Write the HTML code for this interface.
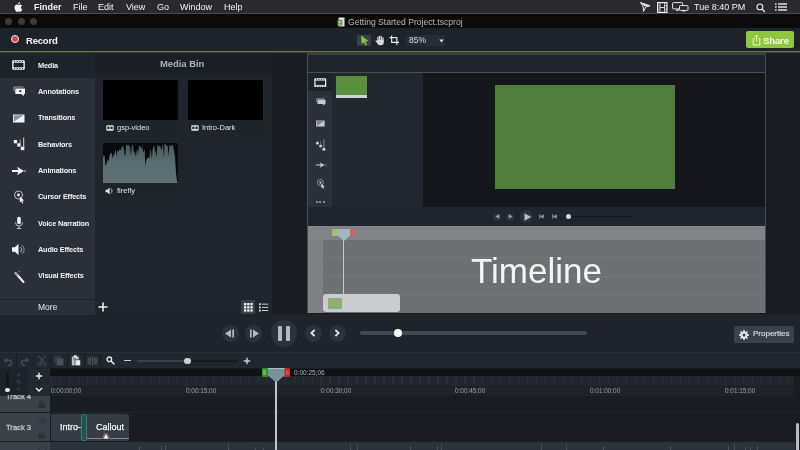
<!DOCTYPE html>
<html>
<head>
<meta charset="utf-8">
<title>Getting Started Project.tscproj</title>
<style>
html,body{margin:0;padding:0;}
body{width:800px;height:450px;overflow:hidden;background:#1e222b;position:relative;font-family:"Liberation Sans",sans-serif;color:#fff;}
.a{position:absolute;}
.t{position:absolute;white-space:nowrap;line-height:1;will-change:transform;}
#menubar{left:0;top:0;width:800px;height:14px;background:#2a2a2c;}
#menubar .t{top:2.5px;font-size:9px;color:#f2f2f2;}
#titlebar{left:0;top:14px;width:800px;height:14px;background:#0b0b0c;}
#toolbar{left:0;top:28px;width:800px;height:24px;background:#1e222b;}
#gline{left:0;top:51px;width:800px;height:1px;background:#65774b;border-bottom:1px solid #38422f;}
#sidebar{left:0;top:53px;width:95px;height:261.500px;background:#2a2f39;z-index:1;}
#sidebar .sel{left:0;top:0;width:95px;height:25px;background:#1e222b;}
#sidebar .lbl{font-size:7.300px;font-weight:bold;color:#f1f3f5;left:37.600px;letter-spacing:-0.150px;}
#bin{left:94px;top:53px;width:178px;height:261.500px;background:#20242d;}
#gap{left:272px;top:53px;width:36px;height:261px;background:#191c21;}
#right{left:765px;top:53px;width:35px;height:261px;background:#1a1c22;border-left:1px solid #454a52;box-sizing:border-box;}
#pv{left:308px;top:53px;width:457px;height:260px;background:#20242e;overflow:hidden;}
#play{left:0;top:314px;width:800px;height:38px;background:#1f232c;}
#tl{left:0;top:352px;width:800px;height:98px;background:#191c21;}
.rl{top:36px;font-size:6.400px;color:#9aa0a8;}
</style>
</head>
<body>

<!-- mac menubar -->
<div id="menubar" class="a">
  <svg class="a" style="left:13px;top:1.5px" width="10" height="11" viewBox="0 0 20 22"><path fill="#f2f2f2" d="M14.2 0c.1 1.200-.4 2.400-1.100 3.200-.8.900-2 1.600-3.100 1.500-.1-1.200.4-2.400 1.100-3.100C11.900.7 13.200.1 14.200 0zM18 7.500c-.1.100-2 1.200-2 3.600 0 2.800 2.400 3.700 2.500 3.800 0 .1-.4 1.400-1.300 2.700-.8 1.200-1.600 2.300-2.900 2.300s-1.600-.7-3.100-.7c-1.400 0-1.900.8-3.100.8s-2-1.100-3-2.400C3.900 15.800 3 13.300 3 11c0-3.800 2.500-5.800 4.900-5.800 1.300 0 2.400.9 3.200.9.800 0 2-.9 3.500-.9.600 0 2.600.1 3.400 2.300z"/></svg>
  <span class="t" style="left:34px;font-weight:bold">Finder</span>
  <span class="t" style="left:73px">File</span>
  <span class="t" style="left:98px">Edit</span>
  <span class="t" style="left:126px">View</span>
  <span class="t" style="left:157px">Go</span>
  <span class="t" style="left:180px">Window</span>
  <span class="t" style="left:224px">Help</span>
  <span class="t" style="left:694px">Tue 8:40 PM</span>
  <svg class="a" style="left:640px;top:2px" width="11" height="10" viewBox="0 0 11 10"><path d="M0.500 0.500 L10 3.800 L5.800 5 L3.500 9.500 L3.200 4.800Z" fill="none" stroke="#e8e8e8" stroke-width="1"/><path d="M0.500 0.500 L10 3.800 L4.500 4.300Z" fill="#e8e8e8"/></svg>
  <svg class="a" style="left:656.500px;top:1.500px" width="11" height="11" viewBox="0 0 11 11"><rect x="0.600" y="0.600" width="9.300" height="9.800" fill="none" stroke="#ededed" stroke-width="1.200"/><rect x="2.600" y="0.600" width="0.800" height="9.800" fill="#ededed"/><rect x="7.100" y="0.600" width="0.800" height="9.800" fill="#ededed"/><rect x="2.600" y="5.100" width="5" height="0.900" fill="#ededed"/><rect x="0.600" y="3.500" width="2.200" height="0.700" fill="#ededed"/><rect x="0.600" y="6.800" width="2.200" height="0.700" fill="#ededed"/><rect x="7.700" y="3.500" width="2.200" height="0.700" fill="#ededed"/><rect x="7.700" y="6.800" width="2.200" height="0.700" fill="#ededed"/></svg>
  <svg class="a" style="left:671.500px;top:2px" width="17" height="10" viewBox="0 0 17 10"><rect x="0.600" y="0.600" width="10" height="6.300" rx="0.800" fill="none" stroke="#e8e8e8" stroke-width="1"/><rect x="7.500" y="3.600" width="8.500" height="4.800" rx="0.800" fill="#2a2a2c" stroke="#e8e8e8" stroke-width="1"/><rect x="4" y="7.500" width="3" height="1.300" fill="#e8e8e8"/><rect x="10.500" y="8.600" width="2.600" height="1" fill="#e8e8e8"/></svg>
  <svg class="a" style="left:756px;top:2.500px" width="10" height="10" viewBox="0 0 10 10"><circle cx="3.900" cy="3.900" r="2.900" fill="none" stroke="#e8e8e8" stroke-width="1.100"/><path d="M6 6 L9 9" stroke="#e8e8e8" stroke-width="1.300" fill="none"/></svg>
  <svg class="a" style="left:774.500px;top:3px" width="12" height="8" viewBox="0 0 12 8"><g fill="#ededed"><rect x="0" y="0.300" width="1.600" height="1.400"/><rect x="3" y="0.300" width="9" height="1.400"/><rect x="0" y="3.300" width="1.600" height="1.400"/><rect x="3" y="3.300" width="9" height="1.400"/><rect x="0" y="6.300" width="1.600" height="1.400"/><rect x="3" y="6.300" width="9" height="1.400"/></g></svg>
  <div class="a" style="left:0;top:13px;width:800px;height:1px;background:#4a4a4c"></div>
</div>

<!-- window title bar -->
<div id="titlebar" class="a">
  <div class="a" style="left:5px;top:4px;width:7px;height:7px;border-radius:50%;background:#3b3b3d"></div>
  <div class="a" style="left:17.5px;top:4px;width:7px;height:7px;border-radius:50%;background:#3b3b3d"></div>
  <div class="a" style="left:30px;top:4px;width:7px;height:7px;border-radius:50%;background:#3b3b3d"></div>
  <svg class="a" style="left:337px;top:2.500px" width="8" height="10" viewBox="0 0 8 10"><path d="M1.500 0.500 H7.500 V9.500 H1.500Z" fill="#dfe3df"/><rect x="0.300" y="3" width="5" height="5.500" fill="#4e8a3a"/><rect x="1.300" y="4.200" width="3" height="0.700" fill="#dfe3df"/><rect x="1.300" y="5.500" width="3" height="0.700" fill="#dfe3df"/><rect x="1.300" y="6.800" width="3" height="0.700" fill="#dfe3df"/></svg>
  <span class="t" style="left:348px;top:3.600px;font-size:8.600px;color:#b9b9bb">Getting Started Project.tscproj</span>
</div>

<!-- app toolbar -->
<div id="toolbar" class="a">
  <div class="a" style="left:11px;top:7.200px;width:6.200px;height:6.200px;border-radius:50%;background:#e2423b;border:1.900px solid #f3f3f3"></div>
  <span class="t" style="left:25.500px;top:8px;font-size:9.500px;font-weight:bold;letter-spacing:-0.200px;color:#f4f4f4">Record</span>
  <div class="a" style="left:357px;top:6.500px;width:13.500px;height:11.500px;background:#3a4049;border-radius:1px"></div>
  <svg class="a" style="left:359.500px;top:7px" width="10" height="11" viewBox="0 0 10 11"><path d="M1.200 0.600 L8.600 6.200 L5.400 6.600 L7 9.800 L5.600 10.500 L4 7.200 L1.600 9.300Z" fill="#8cc63f"/></svg>
  <svg class="a" style="left:374.500px;top:7px" width="10" height="11" viewBox="0 0 10 11"><g fill="#d5d9dc"><rect x="2.300" y="1.600" width="1.300" height="5" rx="0.650"/><rect x="4" y="0.500" width="1.300" height="6" rx="0.650"/><rect x="5.700" y="1" width="1.300" height="6" rx="0.650"/><rect x="7.400" y="2.200" width="1.300" height="5" rx="0.650"/><path d="M2.300 5 H8.700 V7.500 Q8.700 10.300 6 10.300 H5 Q3.500 10.300 2.500 8.800 L0.500 6 Q0.400 5 1.400 5.300 L2.300 6.300Z"/></g></svg>
  <svg class="a" style="left:388.500px;top:7px" width="10.500" height="10.500" viewBox="0 0 12 12"><path d="M3 0.500 V8.500 H11.500 M0.500 3 H9 V11.500" fill="none" stroke="#e4e7ea" stroke-width="1.300"/></svg>
  <div class="a" style="left:406px;top:6.500px;width:39px;height:11.500px;background:#272c36;border-radius:1px"></div>
  <svg class="a" style="left:439px;top:10.500px" width="5" height="4" viewBox="0 0 5 4"><path d="M0.300 0.500 H4.700 L2.500 3.500Z" fill="#dfe3e7"/></svg>
  <span class="t" style="left:409px;top:7.500px;font-size:8.500px;color:#d9dde2">85%</span>
  <div class="a" style="left:746.300px;top:3.300px;width:47.500px;height:16.300px;background:#8fc83e;border-radius:2px"></div>
  <svg class="a" style="left:751.500px;top:6px" width="9" height="12" viewBox="0 0 9 12"><path d="M2.800 4.500 H1.200 V11 H7.800 V4.500 H6.200" fill="none" stroke="#e3f3c3" stroke-width="1"/><path d="M4.500 7.500 V1.300 M2.800 2.800 L4.500 1 L6.200 2.800" fill="none" stroke="#e3f3c3" stroke-width="1"/></svg>
  <span class="t" style="left:763.300px;top:7.500px;font-size:9.500px;font-weight:bold;color:#f4fbe6;letter-spacing:-0.100px">Share</span>
</div>
<div id="gline" class="a"></div>

<!-- tools sidebar -->
<div id="sidebar" class="a">
  <div class="a sel"></div>
  <span class="t lbl" style="top:8.500px">Media</span>
  <span class="t lbl" style="top:34.500px">Annotations</span>
  <span class="t lbl" style="top:61px">Transitions</span>
  <span class="t lbl" style="top:87.500px">Behaviors</span>
  <span class="t lbl" style="top:114px">Animations</span>
  <span class="t lbl" style="top:140px">Cursor Effects</span>
  <span class="t lbl" style="top:166.500px">Voice Narration</span>
  <span class="t lbl" style="top:193px">Audio Effects</span>
  <span class="t lbl" style="top:219px">Visual Effects</span>
  <!-- sidebar icons (coords relative to sidebar top=53) -->
  <svg class="a" style="left:12.300px;top:7.300px" width="13" height="10" viewBox="0 0 13 10"><rect x="0.200" y="0.200" width="12.600" height="9.600" rx="1.200" fill="#f4f5f6"/><rect x="1.500" y="2.700" width="10" height="4.600" fill="#1e222b"/><g fill="#1e222b"><rect x="2" y="1" width="1.100" height="1"/><rect x="4.600" y="1" width="1.100" height="1"/><rect x="7.200" y="1" width="1.100" height="1"/><rect x="9.800" y="1" width="1.100" height="1"/><rect x="2" y="8" width="1.100" height="1"/><rect x="4.600" y="8" width="1.100" height="1"/><rect x="7.200" y="8" width="1.100" height="1"/><rect x="9.800" y="8" width="1.100" height="1"/></g></svg>
  <svg class="a" style="left:13px;top:33px" width="13" height="11" viewBox="0 0 13 11"><path d="M2.300 2.500 H12 V8 H10.800 V10.300 L8.300 8 H2.300Z" fill="#f1f3f5"/><path d="M1 5.500 V1 H10.500" stroke="#a9afb6" stroke-width="0.900" fill="none"/><circle cx="7.300" cy="5.200" r="1.100" fill="#3a3f49"/></svg>
  <svg class="a" style="left:13px;top:61px" width="12" height="9" viewBox="0 0 12 9"><rect x="0" y="0.500" width="11.500" height="8" fill="#f1f3f5"/><path d="M0.800 1.300 H10.700 L0.800 7.700Z" fill="#8d939b"/></svg>
  <svg class="a" style="left:13px;top:83.500px" width="13" height="14" viewBox="0 0 13 14"><g fill="#f4f5f6"><rect x="0.800" y="3" width="3.300" height="3.300"/><rect x="4.300" y="6.300" width="3.300" height="3.300"/><rect x="7.800" y="9.700" width="3.500" height="3.500"/></g><rect x="10.200" y="0.500" width="1" height="9.500" fill="#d5d9dd"/><rect x="6.700" y="2.500" width="0.900" height="4" fill="#b4bac1"/></svg>
  <svg class="a" style="left:11px;top:113px" width="16" height="10" viewBox="0 0 16 10"><path d="M1 4 H7.300 L6 0.800 L13 5 L6 9.200 L7.300 6 H1Z" fill="#f4f5f6"/><circle cx="14" cy="5" r="1.100" fill="#8d939b"/></svg>
  <svg class="a" style="left:13px;top:136px" width="14" height="16" viewBox="0 0 14 16"><circle cx="5.500" cy="6" r="4" fill="none" stroke="#c9cdd2" stroke-width="0.900"/><circle cx="5.500" cy="6" r="1.400" fill="#f1f3f5"/><path d="M6.800 7.800 L11.300 11.500 L9.300 11.800 L10.300 14 L9.200 14.500 L8.200 12.300 L6.800 13.600Z" fill="#f1f3f5"/></svg>
  <svg class="a" style="left:14px;top:163px" width="10" height="14" viewBox="0 0 10 14"><rect x="3.200" y="0.800" width="3.600" height="7.400" rx="1.800" fill="#f1f3f5"/><path d="M1.500 6 V6.500 A3.500 3.500 0 0 0 8.500 6.500 V6" fill="none" stroke="#c9cdd2" stroke-width="0.900"/><rect x="4.550" y="10" width="0.900" height="2.300" fill="#c9cdd2"/><rect x="2.800" y="12" width="4.400" height="0.900" fill="#c9cdd2"/></svg>
  <svg class="a" style="left:11px;top:190px" width="16" height="13" viewBox="0 0 16 13"><path d="M1 4.300 H3.800 L7.500 1 V12 L3.800 8.700 H1Z" fill="#f1f3f5"/><path d="M9.300 4 A3 3 0 0 1 9.300 9" fill="none" stroke="#c9cdd2" stroke-width="0.900"/><path d="M10.800 2 A5.500 5.500 0 0 1 10.800 11" fill="none" stroke="#9aa0a8" stroke-width="0.900"/></svg>
  <svg class="a" style="left:13px;top:217px" width="13" height="14" viewBox="0 0 13 14"><path d="M2.500 3 L10.500 12" stroke="#f1f3f5" stroke-width="2" stroke-linecap="round" fill="none"/><path d="M2.500 3 L4.300 5" stroke="#9aa0a8" stroke-width="2" stroke-linecap="round" fill="none"/><rect x="5.800" y="1.200" width="0.900" height="0.900" fill="#c9cdd2"/></svg>
  <div class="a" style="left:0;top:246px;width:95px;height:1px;background:#1e222b"></div>
  <span class="t" style="left:38px;top:249.500px;font-size:8.500px;color:#e8eaed">More</span>
</div>

<!-- media bin -->
<div id="bin" class="a">
  <div class="a" style="left:0;top:0;width:178px;height:19.500px;background:#1b1e25"></div>
  <span class="t" style="left:65.500px;top:6.300px;font-size:9.400px;font-weight:bold;color:#aeb4bc">Media Bin</span>
  <div class="a" style="left:8.500px;top:26.500px;width:75.500px;height:53.500px;background:#1f232a;border-radius:2px"></div>
  <div class="a" style="left:8.500px;top:26.500px;width:75.500px;height:40.500px;background:#000;border-radius:2px 2px 0 0"></div>
  <svg class="a" style="left:11.5px;top:72px" width="8" height="6" viewBox="0 0 8 6"><rect x="0.300" y="0.300" width="7.400" height="5.400" rx="1" fill="#e4e7ea"/><rect x="1.300" y="1.600" width="2.200" height="2.500" fill="#20242c"/><rect x="4.500" y="1.600" width="2.200" height="2.500" fill="#20242c"/></svg>
  <span class="t" style="left:23px;top:71px;font-size:7.500px;color:#dfe3e7">gsp-video</span>
  <div class="a" style="left:93.500px;top:26.500px;width:75.500px;height:53.500px;background:#1f232a;border-radius:2px"></div>
  <div class="a" style="left:93.500px;top:26.500px;width:75.500px;height:40.500px;background:#000;border-radius:2px 2px 0 0"></div>
  <svg class="a" style="left:96.5px;top:72px" width="8" height="6" viewBox="0 0 8 6"><rect x="0.300" y="0.300" width="7.400" height="5.400" rx="1" fill="#e4e7ea"/><rect x="1.300" y="1.600" width="2.200" height="2.500" fill="#20242c"/><rect x="4.500" y="1.600" width="2.200" height="2.500" fill="#20242c"/></svg>
  <span class="t" style="left:108px;top:71px;font-size:7.500px;color:#dfe3e7">Intro-Dark</span>
  <div class="a" style="left:8.500px;top:89.500px;width:75.500px;height:53.500px;background:#1f232a;border-radius:2px"></div>
  <div class="a" style="left:8.500px;top:89.500px;width:75.500px;height:40.500px;background:#07090b;border-radius:2px 2px 0 0;overflow:hidden">
    <svg class="a" style="left:0;top:0" width="76" height="41" viewBox="0 0 76 41"><defs><linearGradient id="wg" x1="0" y1="0" x2="0" y2="1"><stop offset="0" stop-color="#485a5f"/><stop offset="0.450" stop-color="#586c71"/><stop offset="1" stop-color="#5c7075"/></linearGradient></defs><path fill="url(#wg)" d="M0 41 L0.0 14.5 L0.8 12.1 L1.6 12.7 L2.4 22.6 L3.2 21.9 L4.0 18.8 L4.8 16.0 L5.6 19.0 L6.4 12.5 L7.2 10.9 L8.0 9.7 L8.8 9.7 L9.6 15.7 L10.4 12.6 L11.2 11.4 L12.0 7.9 L12.8 6.8 L13.6 14.1 L14.4 6.6 L15.2 9.0 L16.0 7.7 L16.8 5.7 L17.6 7.6 L18.4 5.1 L19.2 3.5 L20.0 2.6 L20.8 6.2 L21.6 11.8 L22.4 13.0 L23.2 2.1 L24.0 1.6 L24.8 2.2 L25.6 1.9 L26.4 2.9 L27.2 5.0 L28.0 13.3 L28.8 3.0 L29.6 1.6 L30.4 5.0 L31.2 11.2 L32.0 8.1 L32.8 13.9 L33.6 9.2 L34.4 5.6 L35.2 11.0 L36.0 2.8 L36.8 2.7 L37.6 4.2 L38.4 5.7 L39.2 1.3 L40.0 9.1 L40.8 8.5 L41.6 5.5 L42.4 23.8 L43.2 17.7 L44.0 15.4 L44.8 15.2 L45.6 14.1 L46.4 15.6 L47.2 6.6 L48.0 8.2 L48.8 16.7 L49.6 7.1 L50.4 3.0 L51.2 2.7 L52.0 7.9 L52.8 9.8 L53.6 14.4 L54.4 0.8 L55.2 3.5 L56.0 2.9 L56.8 2.5 L57.6 4.0 L58.4 7.4 L59.2 3.3 L60.0 0.8 L60.8 15.1 L61.6 0.8 L62.4 0.6 L63.2 2.5 L64.0 1.9 L64.8 3.6 L65.6 13.4 L66.4 2.1 L67.2 3.2 L68.0 2.5 L68.8 2.1 L69.6 2.0 L70.4 4.1 L72 14 L73 30 L74 38 L75.5 41Z"/></svg>
  </div>
  <svg class="a" style="left:10.500px;top:133.500px" width="9" height="8" viewBox="0 0 9 8"><path d="M0.500 2.700 H2.300 L4.600 0.600 V7.400 L2.300 5.300 H0.500Z" fill="#e4e7ea"/><path d="M5.700 1.500 A3 3 0 0 1 5.700 6.500" fill="none" stroke="#c9cdd2" stroke-width="0.900"/></svg>
  <span class="t" style="left:23px;top:134px;font-size:7.500px;color:#dfe3e7">firefly</span>
  <div class="a" style="left:0;top:246px;width:179px;height:1px;background:#1e222b"></div>
  <!-- add button -->
  <svg class="a" style="left:4px;top:249px" width="10" height="10" viewBox="0 0 10 10"><path d="M5 0.500 V9.500 M0.500 5 H9.500" stroke="#f4f5f6" stroke-width="1.500" fill="none"/></svg>
  <!-- view toggles -->
  <div class="a" style="left:146.500px;top:247px;width:14.500px;height:14px;background:#3a3f49"></div>
  <svg class="a" style="left:149.500px;top:249.500px" width="9" height="9" viewBox="0 0 9 9"><g fill="#f1f3f5"><rect x="0" y="0" width="2.300" height="2.300"/><rect x="3.200" y="0" width="2.300" height="2.300"/><rect x="6.400" y="0" width="2.300" height="2.300"/><rect x="0" y="3.200" width="2.300" height="2.300"/><rect x="3.200" y="3.200" width="2.300" height="2.300"/><rect x="6.400" y="3.200" width="2.300" height="2.300"/><rect x="0" y="6.400" width="2.300" height="2.300"/><rect x="3.200" y="6.400" width="2.300" height="2.300"/><rect x="6.400" y="6.400" width="2.300" height="2.300"/></g></svg>
  <svg class="a" style="left:164.500px;top:249.500px" width="10" height="9" viewBox="0 0 10 9"><g fill="#d9dde1"><rect x="0" y="0.300" width="1.800" height="1.800"/><rect x="2.800" y="0.700" width="6.500" height="0.900"/><rect x="0" y="3.500" width="1.800" height="1.800"/><rect x="2.800" y="3.900" width="6.500" height="0.900"/><rect x="0" y="6.700" width="1.800" height="1.800"/><rect x="2.800" y="7.100" width="6.500" height="0.900"/></g></svg>
</div>

<div id="gap" class="a"></div>
<div class="a" style="left:307px;top:53px;width:1px;height:260px;background:#4a4f57"></div>
<div id="right" class="a"></div>
<div class="a" style="left:307px;top:313px;width:459px;height:1px;background:#15171b"></div>

<!-- embedded tutorial preview -->
<div id="pv" class="a">
  <div class="a" style="left:0;top:0;width:458px;height:19px;background:#20242e"></div>
  <div class="a" style="left:0;top:0;width:458px;height:1.500px;background:#3a423c"></div>
  <div class="a" style="left:0;top:18.500px;width:458px;height:1.500px;background:#465049"></div>
  <!-- mini tool strip -->
  <div class="a" style="left:0;top:20px;width:24px;height:135px;background:#2b303a"></div>
  <div class="a" style="left:0;top:20px;width:24px;height:18px;background:#1e222b"></div>
  <svg class="a" style="left:6px;top:24.500px" width="12.500" height="9.500" viewBox="0 0 13 10"><rect x="0.200" y="0.200" width="12.600" height="9.600" rx="1.200" fill="#e9ebed"/><rect x="1.500" y="2.700" width="10" height="4.600" fill="#1e222b"/><g fill="#1e222b"><rect x="2" y="1" width="1.100" height="1"/><rect x="4.600" y="1" width="1.100" height="1"/><rect x="7.200" y="1" width="1.100" height="1"/><rect x="9.800" y="1" width="1.100" height="1"/><rect x="2" y="8" width="1.100" height="1"/><rect x="4.600" y="8" width="1.100" height="1"/><rect x="7.200" y="8" width="1.100" height="1"/><rect x="9.800" y="8" width="1.100" height="1"/></g></svg>
  <svg class="a" style="left:8px;top:45px" width="10" height="8" viewBox="0 0 10 8"><path d="M1.500 1.500 H9.500 V6 H8.300 V7.800 L6.500 6 H1.500Z" fill="#c5cace"/><path d="M0.500 4 V0.500 H8" stroke="#8d939b" stroke-width="0.700" fill="none"/></svg>
  <svg class="a" style="left:8px;top:67px" width="9" height="7" viewBox="0 0 12 9"><rect x="0" y="0.500" width="11.500" height="8" fill="#c5cace"/><path d="M0.800 1.300 H10.700 L0.800 7.700Z" fill="#7d838b"/></svg>
  <svg class="a" style="left:7px;top:86px" width="12" height="13" viewBox="0 0 13 14"><g fill="#c5cace"><circle cx="2.600" cy="4.400" r="1.700"/><circle cx="6.100" cy="7.600" r="1.700"/><circle cx="9.600" cy="11.100" r="1.700"/></g><rect x="9.200" y="0.500" width="0.900" height="9" fill="#9aa0a8"/><rect x="5.700" y="2.500" width="0.800" height="3.500" fill="#7d838b"/></svg>
  <svg class="a" style="left:6.500px;top:107.500px" width="12" height="8" viewBox="0 0 16 10"><path d="M1 4.300 H7.500 L6.300 1.500 L12.800 5 L6.300 8.500 L7.500 5.700 H1Z" fill="#c5cace"/><circle cx="14" cy="5" r="1.100" fill="#7d838b"/></svg>
  <svg class="a" style="left:7.500px;top:125px" width="11" height="12" viewBox="0 0 14 16"><circle cx="5.500" cy="6" r="4" fill="none" stroke="#aab0b7" stroke-width="1"/><circle cx="5.500" cy="6" r="1.500" fill="#d5d9dd"/><path d="M6.800 7.800 L11.300 11.500 L9.300 11.800 L10.300 14 L9.200 14.500 L8.200 12.300 L6.800 13.600Z" fill="#d5d9dd"/></svg>
  <div class="a" style="left:7.500px;top:148px;width:2.300px;height:2.300px;border-radius:50%;background:#a4aab1"></div>
  <div class="a" style="left:11px;top:148px;width:2.300px;height:2.300px;border-radius:50%;background:#a4aab1"></div>
  <div class="a" style="left:14.500px;top:148px;width:2.300px;height:2.300px;border-radius:50%;background:#a4aab1"></div>
  <!-- mini bin -->
  <div class="a" style="left:24px;top:20px;width:91px;height:134px;background:#21262f"></div>
  <div class="a" style="left:28px;top:23px;width:31px;height:18.500px;background:#58903e"></div>
  <div class="a" style="left:28px;top:42px;width:31px;height:3px;background:#cfd3d6"></div>
  <!-- canvas -->
  <div class="a" style="left:115px;top:20px;width:343px;height:133.500px;background:#15171c"></div>
  <div class="a" style="left:187px;top:32px;width:180px;height:104px;background:#4f7f3b"></div>
  <!-- mini playback -->
  <div class="a" style="left:0;top:153.500px;width:458px;height:19.500px;background:#1f242e"></div>
  <div class="a" style="left:185px;top:159.500px;width:8px;height:8px;border-radius:50%;background:#2d323c"></div>
  <div class="a" style="left:198px;top:159.500px;width:8px;height:8px;border-radius:50%;background:#2d323c"></div>
  <div class="a" style="left:212px;top:157px;width:13px;height:13px;border-radius:50%;background:#2d323c"></div>
  <svg class="a" style="left:186.500px;top:161px" width="5" height="5" viewBox="0 0 5 5"><path d="M0.300 2.500 L4.300 0.300 V4.700Z" fill="#949da7"/></svg>
  <svg class="a" style="left:200px;top:161px" width="5" height="5" viewBox="0 0 5 5"><path d="M4.700 2.500 L0.700 0.300 V4.700Z" fill="#949da7"/></svg>
  <svg class="a" style="left:215.500px;top:159.500px" width="8" height="8" viewBox="0 0 8 8"><path d="M0.500 0.200 L7.300 4 L0.500 7.800Z" fill="#b4bcc4"/></svg>
  <svg class="a" style="left:230.500px;top:161px" width="5" height="5" viewBox="0 0 5 5"><path d="M0.300 0.300 H1.300 V4.700 H0.300Z M4.700 0.300 V4.700 L1.300 2.500Z" fill="#949da7"/></svg>
  <svg class="a" style="left:244px;top:161px" width="5" height="5" viewBox="0 0 5 5"><path d="M0.300 0.300 H1.300 V4.700 H0.300Z M4.700 0.300 V4.700 L1.300 2.500Z" fill="#949da7"/></svg>
  <div class="a" style="left:263px;top:162.800px;width:61px;height:1.500px;background:#14171c"></div>
  <div class="a" style="left:258px;top:161px;width:5px;height:5px;border-radius:50%;background:#d5d9dd"></div>
  <!-- grey overlay timeline -->
  <div class="a" style="left:0;top:172.500px;width:458px;height:87.500px;background:#6e7074"></div>
  <div class="a" style="left:0;top:172.500px;width:458px;height:14.500px;background:#808487"></div>
  <div class="a" style="left:0;top:187px;width:15px;height:73px;background:#7e8084"></div>
  <div class="a" style="left:15px;top:204px;width:443px;height:1px;background:#76787c"></div>
  <div class="a" style="left:15px;top:222.500px;width:443px;height:1px;background:#76787c"></div>
  <div class="a" style="left:15px;top:241px;width:443px;height:1px;background:#76787c"></div>
  <!-- mini playhead -->
  <div class="a" style="left:34.500px;top:182px;width:1.200px;height:60px;background:#c5c9cd"></div>
  <div class="a" style="left:24px;top:176px;width:6px;height:7px;background:#a0c26c"></div>
  <div class="a" style="left:41.500px;top:176px;width:5.500px;height:7px;background:#d4665f"></div>
  <svg class="a" style="left:29.500px;top:176px" width="12" height="12" viewBox="0 0 12 12"><path d="M0 0 H12 V6.500 L6.800 11.500 H5.200 L0 6.500Z" fill="#a0b8c4"/></svg>
  <div class="a" style="left:15px;top:241px;width:77px;height:18px;border-radius:3px;background:#c8cccf"></div>
  <div class="a" style="left:19.500px;top:244.500px;width:14.500px;height:11px;background:#8fae7b"></div>
  <span class="t" style="left:163px;top:200px;font-size:35px;color:#f4f4f4;letter-spacing:0">Timeline</span>
</div>

<!-- playback bar -->
<div id="play" class="a">
  <!-- step back -->
  <div class="a" style="left:221.500px;top:10.500px;width:17px;height:17px;border-radius:50%;background:#2c313b"></div>
  <svg class="a" style="left:225px;top:14.500px" width="10" height="9" viewBox="0 0 10 9"><path d="M0 4.5 L6 0.500 V8.5Z M7.300 0.500 H9 V8.5 H7.300Z" fill="#aeb9c4"/></svg>
  <!-- step fwd -->
  <div class="a" style="left:245px;top:10.500px;width:17px;height:17px;border-radius:50%;background:#2c313b"></div>
  <svg class="a" style="left:248.500px;top:14.500px" width="10" height="9" viewBox="0 0 10 9"><path d="M10 4.5 L4 0.500 V8.5Z M1 0.500 H2.700 V8.5 H1Z" fill="#aeb9c4"/></svg>
  <!-- pause -->
  <div class="a" style="left:270.500px;top:6px;width:26.500px;height:26.500px;border-radius:50%;background:#2c313b"></div>
  <div class="a" style="left:278px;top:11.500px;width:4.300px;height:15px;border-radius:1px;background:#aeb9c4"></div>
  <div class="a" style="left:285.700px;top:11.500px;width:4.300px;height:15px;border-radius:1px;background:#aeb9c4"></div>
  <!-- prev / next -->
  <div class="a" style="left:305px;top:10.500px;width:17px;height:17px;border-radius:50%;background:#2c313b"></div>
  <svg class="a" style="left:309.800px;top:15px" width="6" height="8" viewBox="0 0 6 8"><path d="M4.600 0.800 L1.400 4 L4.600 7.200" fill="none" stroke="#dfe4e9" stroke-width="1.900"/></svg>
  <div class="a" style="left:328.500px;top:10.500px;width:17px;height:17px;border-radius:50%;background:#2c313b"></div>
  <svg class="a" style="left:334.300px;top:15px" width="6" height="8" viewBox="0 0 6 8"><path d="M1.400 0.800 L4.600 4 L1.400 7.200" fill="none" stroke="#dfe4e9" stroke-width="1.900"/></svg>
  <!-- scrubber -->
  <div class="a" style="left:360px;top:17.200px;width:227px;height:4px;border-radius:2px;background:#3f4952"></div>
  <div class="a" style="left:394px;top:15.400px;width:7.500px;height:7.500px;border-radius:50%;background:#f6f7f8"></div>
  <!-- properties -->
  <div class="a" style="left:734px;top:11.5px;width:60px;height:17.5px;background:#39424b;border-radius:1.5px"></div>
  <svg class="a" style="left:738.500px;top:15.500px" width="10" height="10" viewBox="-5 -5 10 10"><g fill="#e3e7ea"><circle r="3.300"/><rect x="-1" y="-4.800" width="2" height="9.600"/><rect x="-1" y="-4.800" width="2" height="9.600" transform="rotate(45)"/><rect x="-1" y="-4.800" width="2" height="9.600" transform="rotate(90)"/><rect x="-1" y="-4.800" width="2" height="9.600" transform="rotate(135)"/></g><circle r="1.500" fill="#39424b"/></svg>
  <span class="t" style="left:752.500px;top:16px;font-size:8px;color:#d4d9de;-webkit-text-stroke:0.200px #d4d9de">Properties</span>
</div>

<!-- timeline -->
<div id="tl" class="a">
  <div class="a" style="left:0;top:0;width:800px;height:1px;background:#2a2f38"></div>
  <div class="a" style="left:0;top:1px;width:800px;height:15px;background:#22262f"></div>
  <!-- toolbar separators -->
  <div class="a" style="left:16px;top:1px;width:1px;height:15px;background:#1a1d24"></div>
  <div class="a" style="left:33px;top:1px;width:1px;height:15px;background:#1a1d24"></div>
  <div class="a" style="left:50px;top:1px;width:1px;height:15px;background:#1a1d24"></div>
  <div class="a" style="left:67px;top:1px;width:1px;height:15px;background:#1a1d24"></div>
  <div class="a" style="left:84px;top:1px;width:1px;height:15px;background:#1a1d24"></div>
  <div class="a" style="left:100px;top:1px;width:1px;height:15px;background:#1a1d24"></div>
  <!-- edit tools -->
  <svg class="a" style="left:3px;top:3.500px" width="10" height="10" viewBox="0 0 10 10"><path d="M3.200 4.200 H6 A2.500 2.500 0 0 1 6 9.200 H5" fill="none" stroke="#454b55" stroke-width="1.400"/><path d="M0.800 4.200 L4 1.400 V7Z" fill="#454b55"/></svg>
  <svg class="a" style="left:20px;top:3.500px" width="10" height="10" viewBox="0 0 10 10"><path d="M6.800 4.200 H4 A2.500 2.500 0 0 0 4 9.200 H5" fill="none" stroke="#454b55" stroke-width="1.400"/><path d="M9.200 4.200 L6 1.400 V7Z" fill="#454b55"/></svg>
  <svg class="a" style="left:36.500px;top:3px" width="10" height="12" viewBox="0 0 10 12"><path d="M1.500 0.800 L7.200 8 M8.500 0.800 L2.800 8" stroke="#454b55" stroke-width="1.200" fill="none"/><circle cx="2.300" cy="9.300" r="1.500" fill="none" stroke="#454b55" stroke-width="1"/><circle cx="7.700" cy="9.300" r="1.500" fill="none" stroke="#454b55" stroke-width="1"/></svg>
  <svg class="a" style="left:54px;top:4px" width="10" height="10" viewBox="0 0 10 10"><rect x="0.500" y="0.500" width="6.500" height="6.500" fill="#3b414b"/><rect x="2.500" y="2.500" width="7" height="7" fill="#4a505a" stroke="#30353f" stroke-width="0.600"/></svg>
  <svg class="a" style="left:70.500px;top:3px" width="10" height="11" viewBox="0 0 10 11"><rect x="0.800" y="1.600" width="7" height="8.800" fill="#c3c8cd"/><rect x="2.800" y="0.300" width="3" height="2.200" fill="#e4e7ea"/><rect x="4" y="4.800" width="5.600" height="6" fill="#e9ecee" stroke="#252a34" stroke-width="0.700"/><rect x="2" y="3.400" width="2.500" height="0.800" fill="#252a34"/></svg>
  <svg class="a" style="left:86.500px;top:3.500px" width="11" height="10" viewBox="0 0 11 10"><rect x="0.500" y="1.500" width="3.800" height="7" fill="#434953"/><rect x="6.700" y="1.500" width="3.800" height="7" fill="#434953"/><rect x="5" y="0" width="1" height="10" fill="#4d535d"/></svg>
  <svg class="a" style="left:105.500px;top:4px" width="9" height="9" viewBox="0 0 9 9"><circle cx="3.300" cy="3.300" r="2.300" fill="none" stroke="#e4e7ea" stroke-width="1.300"/><path d="M5 5 L8 8" stroke="#e4e7ea" stroke-width="1.600" stroke-linecap="round" fill="none"/></svg>
  <!-- zoom slider -->
  <div class="a" style="left:124px;top:8px;width:6.500px;height:1.300px;background:#c9cdd2"></div>
  <div class="a" style="left:137px;top:7.500px;width:101px;height:2.500px;border-radius:1.500px;background:#181b21"></div>
  <div class="a" style="left:137px;top:7.500px;width:50px;height:2.500px;border-radius:1.500px;background:#3a404a"></div>
  <div class="a" style="left:184px;top:5.5px;width:6.5px;height:6.5px;border-radius:50%;background:#cdd1d5"></div>
  <svg class="a" style="left:243px;top:4.800px" width="8" height="8" viewBox="0 0 8 8"><path d="M4 0.800 V7.200 M0.800 4 H7.200" stroke="#c9cdd2" stroke-width="1.400" fill="none"/></svg>

  <!-- left header of ruler -->
  <div class="a" style="left:0;top:16px;width:50px;height:28px;background:#1e222b"></div>
  <div class="a" style="left:28px;top:17px;width:22px;height:13px;background:#242830"></div>
  <div class="a" style="left:28px;top:31px;width:22px;height:13px;background:#242830"></div>
  <div class="a" style="left:6px;top:20px;width:2.5px;height:16px;border-radius:1px;background:#14171c"></div>
  <div class="a" style="left:5px;top:35.5px;width:4.5px;height:4.5px;border-radius:50%;background:#e3e6e9"></div>
  <svg class="a" style="left:35px;top:20px" width="8" height="8" viewBox="0 0 8 8"><path d="M4 0.800 V7.200 M0.800 4 H7.200" stroke="#eef0f2" stroke-width="1.400" fill="none"/></svg>
  <svg class="a" style="left:35px;top:35px" width="8" height="5" viewBox="0 0 8 5"><path d="M1 1 L4 4 L7 1" fill="none" stroke="#eef0f2" stroke-width="1.4"/></svg>

  <!-- black strip + ruler -->
  <div class="a" style="left:50px;top:16.500px;width:750px;height:7.500px;background:#101216"></div>
  <div class="a" style="left:50px;top:24px;width:744px;height:20px;background:#1e222a"></div>
  <div class="a" style="left:50px;top:24px;width:744px;height:9px;background:#22262f"></div>
  <div class="a" style="left:50.5px;top:24px;width:744px;height:7px;background:repeating-linear-gradient(90deg,#2a2f38 0,#2a2f38 1.300px,transparent 1.300px,transparent 8.983px)"></div>
  <div class="a" style="left:50.5px;top:24px;width:744px;height:17px;background:repeating-linear-gradient(90deg,#282d36 0,#282d36 1px,transparent 1px,transparent 134.750px)"></div>
  <span class="t rl" style="left:51px">0:00:00;00</span>
  <span class="t rl" style="left:185.700px">0:00:15;00</span>
  <span class="t rl" style="left:320.500px">0:00:30;00</span>
  <span class="t rl" style="left:455.200px">0:00:45;00</span>
  <span class="t rl" style="left:590px">0:01:00;00</span>
  <span class="t rl" style="left:724.700px">0:01:15;00</span>

  <!-- tracks -->
  <div class="a" style="left:0;top:44px;width:50px;height:16px;background:#3b4148"></div>
  <div class="a" style="left:0;top:61px;width:50px;height:28px;background:#3b4148"></div>
  <div class="a" style="left:0;top:90px;width:50px;height:8px;background:#3b4148"></div>
  <div class="a" style="left:50px;top:60px;width:750px;height:1px;background:#22262e"></div>
  <div class="a" style="left:50px;top:90px;width:745px;height:8px;background:#2b323c"></div>
  <span class="t" style="left:6.300px;top:41.300px;font-size:7.600px;color:#c0c4c9;-webkit-text-stroke:0.300px #c0c4c9;clip-path:inset(2.700px 0 0 0)">Track 4</span>
  <span class="t" style="left:6.300px;top:71.500px;font-size:7.600px;color:#c0c4c9;-webkit-text-stroke:0.300px #c0c4c9">Track 3</span>

  <svg class="a" style="left:38px;top:48px" width="7" height="8" viewBox="0 0 7 8"><rect x="0.800" y="3.500" width="5.400" height="4" fill="#2e333a" stroke="#2e333a" stroke-width="0.900"/><path d="M2 3.500 V2 A1.500 1.500 0 0 1 5 2" fill="none" stroke="#2e333a" stroke-width="0.900"/></svg>
  <svg class="a" style="left:37.500px;top:65.500px" width="9" height="6" viewBox="0 0 9 6"><path d="M0.500 3 Q4.500 -1.500 8.500 3 Q4.500 7.500 0.500 3Z" fill="none" stroke="#2e333a" stroke-width="0.900"/><circle cx="4.500" cy="3" r="1.200" fill="#2e333a"/></svg>
  <svg class="a" style="left:38px;top:78.500px" width="7" height="8" viewBox="0 0 7 8"><rect x="0.800" y="3.500" width="5.400" height="4" fill="#2e333a" stroke="#2e333a" stroke-width="0.900"/><path d="M2 3.500 V2 A1.500 1.500 0 0 1 5 2" fill="none" stroke="#2e333a" stroke-width="0.900"/></svg>
  <svg class="a" style="left:37.500px;top:93.500px" width="9" height="6" viewBox="0 0 9 6"><path d="M0.500 3 Q4.500 -1.500 8.500 3 Q4.500 7.500 0.500 3Z" fill="none" stroke="#2e333a" stroke-width="0.900"/></svg>
  <!-- dim zoom marks in ruler header -->
  <svg class="a" style="left:15px;top:20px" width="7" height="21" viewBox="0 0 7 21"><g stroke="#3d434d" stroke-width="0.900" fill="none"><path d="M3.500 1.500 V4.500 M2 3 H5"/><circle cx="3.300" cy="9.300" r="1.500"/><path d="M4.400 10.400 L5.600 11.600"/><path d="M3.500 15.500 V18.500 M2 17 H5"/></g></svg>
  <!-- audio ticks on lower track -->
  <div class="a" style="left:139px;top:94px;width:1px;height:4px;background:#48505a"></div>
  <div class="a" style="left:161px;top:94px;width:1px;height:4px;background:#48505a"></div>
  <div class="a" style="left:165px;top:93px;width:1px;height:5px;background:#48505a"></div>
  <div class="a" style="left:228px;top:92px;width:1px;height:6px;background:#48505a"></div>
  <div class="a" style="left:255px;top:95px;width:1px;height:3px;background:#48505a"></div>
  <div class="a" style="left:263px;top:95px;width:1px;height:3px;background:#48505a"></div>
  <div class="a" style="left:350px;top:92px;width:1px;height:6px;background:#48505a"></div>
  <div class="a" style="left:357px;top:93px;width:1px;height:5px;background:#48505a"></div>
  <div class="a" style="left:410px;top:94px;width:1px;height:4px;background:#48505a"></div>
  <div class="a" style="left:437px;top:94px;width:1px;height:4px;background:#48505a"></div>
  <div class="a" style="left:441px;top:92px;width:1px;height:6px;background:#48505a"></div>
  <div class="a" style="left:541px;top:92px;width:1px;height:6px;background:#48505a"></div>
  <div class="a" style="left:566px;top:92px;width:1px;height:6px;background:#48505a"></div>
  <div class="a" style="left:603px;top:94px;width:1px;height:4px;background:#48505a"></div>
  <div class="a" style="left:670px;top:94px;width:1px;height:4px;background:#48505a"></div>
  <div class="a" style="left:728px;top:94px;width:1px;height:4px;background:#48505a"></div>
  <div class="a" style="left:734px;top:92px;width:1px;height:6px;background:#48505a"></div>
  <div class="a" style="left:745px;top:95px;width:1px;height:3px;background:#48505a"></div>
  <div class="a" style="left:750px;top:95px;width:1px;height:3px;background:#48505a"></div>
  <div class="a" style="left:757px;top:94px;width:1px;height:4px;background:#48505a"></div>
  <!-- clips -->
  <div class="a" style="left:51px;top:61.700px;width:31px;height:27px;background:#363b45;border-radius:2px 0 0 2px"></div>
  <div class="a" style="left:86px;top:61.700px;width:42.700px;height:27px;background:#363b45;border-radius:0 2px 2px 0"></div>
  <div class="a" style="left:81.200px;top:61.700px;width:5.500px;height:27px;background:#2b4b4d;border:1.300px solid #23877d;border-radius:1.800px;box-sizing:border-box"></div>
  
  <div class="a" style="left:86.500px;top:85.800px;width:42px;height:1.500px;background:#858a92"></div>
  <svg class="a" style="left:100px;top:80.300px" width="12" height="7" viewBox="0 0 12 7"><path d="M0 7 L2 6 L4 2 Q6 0 8 2 L10 6 L12 7Z" fill="#6a7078"/><path d="M3.700 6.500 L6 2.200 L8.300 6.500Z" fill="#fafafa"/></svg>
  <span class="t" style="left:59.5px;top:70.5px;font-size:9px;color:#f6f6f6;-webkit-text-stroke:0.250px #f6f6f6">Intro-</span>
  <span class="t" style="left:95.5px;top:70.5px;font-size:9px;color:#f6f6f6;-webkit-text-stroke:0.250px #f6f6f6">Callout</span>

  <!-- playhead -->
  <div class="a" style="left:275.200px;top:28px;width:1.600px;height:70px;background:#bfc5ca"></div>
  <div class="a" style="left:261.800px;top:16.300px;width:6px;height:8.700px;background:#358f2e;border-radius:1px 0 0 1px"></div>
  <div class="a" style="left:263.300px;top:17.800px;width:3px;height:5.700px;background:#5fbd4f"></div>
  <div class="a" style="left:284.300px;top:16.300px;width:6px;height:8.700px;background:#b92d28;border-radius:0 1px 1px 0"></div>
  <div class="a" style="left:285.800px;top:17.800px;width:3px;height:5.700px;background:#e0463e"></div>
  <svg class="a" style="left:267.800px;top:16.300px" width="17" height="15" viewBox="0 0 17 15"><path d="M0 0 H16.500 V7.500 L9.300 13.800 H7.200 L0 7.500Z" fill="#7b929c"/><rect x="0" y="0" width="16.500" height="1" fill="#a9bcc4"/></svg>
  <span class="t" style="left:294px;top:18px;font-size:6.5px;color:#aab0b7">0:00:25;06</span>

  <!-- scrollbar -->
  <div class="a" style="left:795.5px;top:71px;width:3.5px;height:30px;border-radius:2px;background:#b9bdc2"></div>
</div>

</body>
</html>
